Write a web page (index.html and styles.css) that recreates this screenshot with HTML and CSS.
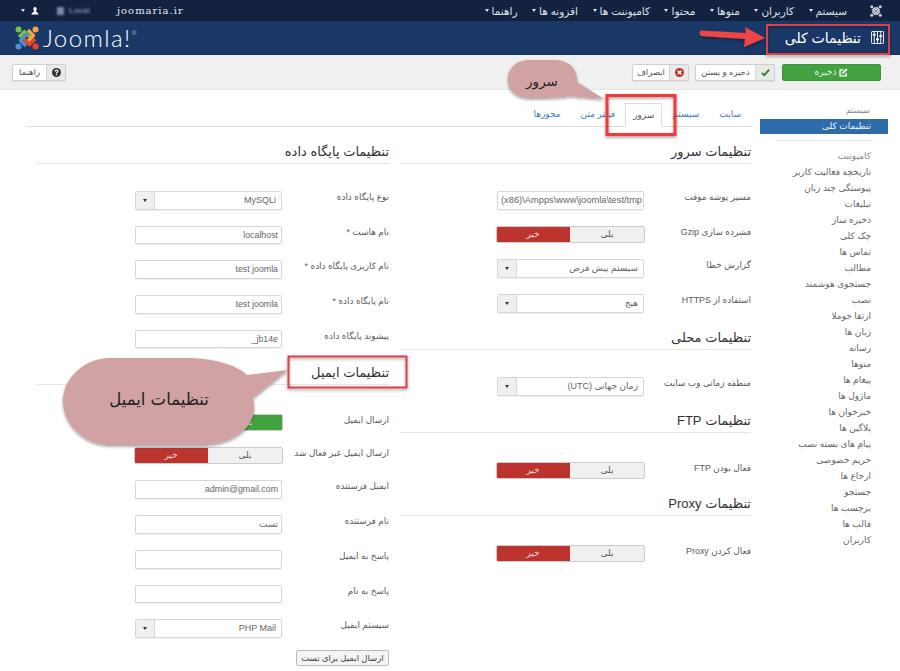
FILE: index.html
```html
<!DOCTYPE html>
<html lang="fa" dir="rtl">
<head>
<meta charset="utf-8">
<title>تنظیمات کلی</title>
<link rel="stylesheet" href="styles.css">
</head>
<body>
<nav class="topnav">
  <svg class="topnav-logo" viewBox="0 0 24 24"><g fill="none" stroke="#c9ced8" stroke-width="3.200" stroke-linejoin="round"><path d="M4 11L9.500 5.500 17 13"/><path d="M4 11L9.500 5.500 17 13" transform="rotate(90 12 12)"/><path d="M4 11L9.500 5.500 17 13" transform="rotate(180 12 12)"/><path d="M4 11L9.500 5.500 17 13" transform="rotate(270 12 12)"/></g><g fill="#c9ced8"><circle cx="3.500" cy="3.500" r="3"/><circle cx="20.500" cy="3.500" r="3"/><circle cx="20.500" cy="20.500" r="3"/><circle cx="3.500" cy="20.500" r="3"/></g></svg>
  <ul class="topnav-menu">
    <li>سیستم<i class="caret"></i></li>
    <li>کاربران<i class="caret"></i></li>
    <li>منوها<i class="caret"></i></li>
    <li>محتوا<i class="caret"></i></li>
    <li>کامپوننت ها<i class="caret"></i></li>
    <li>افزونه ها<i class="caret"></i></li>
    <li>راهنما<i class="caret"></i></li>
  </ul>
  <div class="topnav-left">
    <i class="caret"></i>
    <svg class="user-icon" viewBox="0 0 8 8"><path fill="#fff" d="M4 0C2.800 0 2.300 1 2.400 2.200 2.500 3.200 3 4 3 4.400 3 5 .6 5.400 .6 7V7.600H7.400V7C7.400 5.400 5 5 5 4.400 5 4 5.500 3.200 5.600 2.200 5.700 1 5.200 0 4 0Z"/></svg>
    <span class="blurred"><i class="blob"></i>Local</span>
    <span class="site-name">joomaria.ir</span>
  </div>
</nav>
<header class="brandbar">
  <h1 class="page-title">
    <svg class="title-icon" viewBox="0 0 14 14"><g fill="none" stroke="#fff"><rect x=".5" y=".5" width="13" height="13" rx="1"/><path d="M3.500 1V13M7 1V13M10.500 1V13"/></g><g fill="#fff"><rect x="2" y="3" width="3" height="2"/><rect x="5.500" y="8" width="3" height="2"/><rect x="9" y="4.500" width="3" height="2"/></g></svg>
    تنظیمات کلی
  </h1>
  <div class="joomla-brand">
    <span class="joomla-word">Joomla!<sup>®</sup></span>
    <svg class="joomla-logo" viewBox="0 0 24 24"><g fill="none" stroke-width="3.200" stroke-linejoin="round"><path stroke="#7ac143" d="M4 11L9.500 5.500 17 13"/><path stroke="#f9a541" d="M4 11L9.500 5.500 17 13" transform="rotate(90 12 12)"/><path stroke="#f44321" d="M4 11L9.500 5.500 17 13" transform="rotate(180 12 12)"/><path stroke="#5091cd" d="M4 11L9.500 5.500 17 13" transform="rotate(270 12 12)"/></g><circle cx="3.500" cy="3.500" r="3" fill="#7ac143"/><circle cx="20.500" cy="3.500" r="3" fill="#f9a541"/><circle cx="20.500" cy="20.500" r="3" fill="#f44321"/><circle cx="3.500" cy="20.500" r="3" fill="#5091cd"/></svg>
  </div>
</header>
<div class="toolbar">
  <button class="btn-save"><svg class="ico" viewBox="0 0 10 10"><path fill="none" stroke="#fff" stroke-width="1.500" d="M8 5.500V8.800H1.200V2H5"/><path fill="#fff" d="M3.500 5L8 .5 9.500 2 5 6.500H3.500Z"/></svg>ذخیره</button>
  <button class="btn btn-close"><span class="btn-ico"><svg class="ico" viewBox="0 0 10 10"><path fill="none" stroke="#378137" stroke-width="2.200" d="M1 5.500L3.800 8 9 1.800"/></svg></span><span class="btn-label">ذخیره و بستن</span></button>
  <button class="btn btn-cancel"><span class="btn-ico"><svg class="ico" viewBox="0 0 10 10"><circle cx="5" cy="5" r="5" fill="#bd362f"/><path stroke="#fff" stroke-width="1.500" d="M3 3L7 7M7 3L3 7"/></svg></span><span class="btn-label">انصراف</span></button>
  <button class="btn btn-help"><span class="btn-ico"><svg class="ico" viewBox="0 0 10 10"><circle cx="5" cy="5" r="5" fill="#333"/><path fill="none" stroke="#fff" stroke-width="1.300" d="M3.500 3.800C3.500 2 6.600 2 6.600 3.800 6.600 4.900 5 4.800 5 6"/><rect x="4.300" y="6.800" width="1.400" height="1.300" fill="#fff"/></svg></span><span class="btn-label">راهنما</span></button>
</div>
<div class="layout">
  <aside class="sidebar">
    <div class="side-head">سیستم</div>
    <div class="side-active">تنظیمات کلی</div>
    <hr class="side-rule">
    <ul class="side-list">
      <li>کامپوننت</li><li>تاریخچه فعالیت کاربر</li><li>پیوستگی چند زبان</li><li>تبلیغات</li><li>ذخیره ساز</li><li>چک کلی</li><li>تماس ها</li><li>مطالب</li><li>جستجوی هوشمند</li><li>نصب</li><li>ارتقا جوملا</li><li>زبان ها</li><li>رسانه</li><li>منوها</li><li>پیغام ها</li><li>ماژول ها</li><li>خبرخوان ها</li><li>پلاگین ها</li><li>پیام های بسته نصب</li><li>حریم خصوصی</li><li>ارجاع ها</li><li>جستجو</li><li>برچسب ها</li><li>قالب ها</li><li>کاربران</li>
    </ul>
  </aside>
  <main class="content">
    <ul class="tabs">
      <li>سایت</li><li>سیستم</li><li class="active">سرور</li><li>فیلتر متن</li><li>مجوزها</li>
    </ul>
    <div class="columns">
      <section class="col col-server">
        <h3 class="first">تنظیمات سرور</h3>
        <div class="field"><label>مسیر پوشه موقت</label><div class="input path">(x86)\Ampps\www\joomla\test/tmp</div></div>
        <div class="field toggle-row"><label>فشرده سازی Gzip</label><div class="toggle"><span class="opt">بلی</span><span class="opt no">خیر</span></div></div>
        <div class="field"><label>گزارش خطا</label><div class="select"><span class="val">سیستم پیش فرض</span><span class="arrow"><i class="caret dark"></i></span></div></div>
        <div class="field"><label>استفاده از HTTPS</label><div class="select"><span class="val">هیچ</span><span class="arrow"><i class="caret dark"></i></span></div></div>
        <h3>تنظیمات محلی</h3>
        <div class="field"><label>منطقه زمانی وب سایت</label><div class="select"><span class="val">زمان جهانی (UTC)</span><span class="arrow"><i class="caret dark"></i></span></div></div>
        <h3 class="before-toggle">تنظیمات FTP</h3>
        <div class="field toggle-row"><label>فعال بودن FTP</label><div class="toggle"><span class="opt">بلی</span><span class="opt no">خیر</span></div></div>
        <h3 class="before-toggle">تنظیمات Proxy</h3>
        <div class="field toggle-row"><label>فعال کردن Proxy</label><div class="toggle"><span class="opt">بلی</span><span class="opt no">خیر</span></div></div>
      </section>
      <section class="col col-db">
        <h3 class="first">تنظیمات پایگاه داده</h3>
        <div class="field tall"><label>نوع پایگاه داده</label><div class="select"><span class="val">MySQLi</span><span class="arrow"><i class="caret dark"></i></span></div></div>
        <div class="field tall"><label>نام هاست *</label><div class="input">localhost</div></div>
        <div class="field tall"><label>نام کاربری پایگاه داده *</label><div class="input">test joomla</div></div>
        <div class="field tall"><label>نام پایگاه داده *</label><div class="input">test joomla</div></div>
        <div class="field tall"><label>پیشوند پایگاه داده</label><div class="input">_jb14e</div></div>
        <h3 class="before-toggle">تنظیمات ایمیل</h3>
        <div class="field toggle-row"><label>ارسال ایمیل</label><div class="toggle on"><span class="opt yes">بلی</span><span class="opt">خیر</span></div></div>
        <div class="field toggle-row"><label>ارسال ایمیل غیر فعال شد</label><div class="toggle"><span class="opt">بلی</span><span class="opt no">خیر</span></div></div>
        <div class="field tall"><label>ایمیل فرستنده</label><div class="input">admin@gmail.com</div></div>
        <div class="field tall"><label>نام فرستنده</label><div class="input fa">تست</div></div>
        <div class="field tall"><label>پاسخ به ایمیل</label><div class="input"></div></div>
        <div class="field tall"><label>پاسخ به نام</label><div class="input"></div></div>
        <div class="field tall last"><label>سیستم ایمیل</label><div class="select"><span class="val">PHP Mail</span><span class="arrow"><i class="caret dark"></i></span></div></div>
        <button class="btn-test">ارسال ایمیل برای تست</button>
      </section>
    </div>
  </main>
</div>
<svg class="annotations" viewBox="0 0 900 671">
  <defs><filter id="sh" x="-10%" y="-10%" width="125%" height="125%"><feDropShadow dx="0" dy="1.500" stdDeviation="1.500" flood-color="#000" flood-opacity=".4"/></filter></defs>
  <g filter="url(#sh)">
    <path fill="#f04444" d="M701 30.500L746 33 745 27 765 38 744 47 745 39 701 36Q698 33 701 30.500Z"/>
    <rect x="767" y="25" width="122" height="29" fill="none" stroke="#d9434a" stroke-width="2"/>
    <rect x="607" y="95.500" width="68" height="39" fill="none" stroke="#ee3b3b" stroke-width="3"/>
    <path fill="#d0a2a3" d="M530 60H554C570 60 578 70 577 82L604 99 570 96Q558 98 530 98 508 97 508 79C508 68 516 60 530 60Z"/>
    <rect x="288.500" y="356.500" width="118" height="31" fill="none" stroke="#d9434a" stroke-width="2"/>
    <path fill="#d0a2a3" d="M110 358H185C220 358 240 368 247 375L288 370 253 398C260 425 235 445 200 445H110C85 445 63 425 63 401 63 378 85 358 110 358Z"/>
  </g>
  <text class="note-sm" x="542" y="86" text-anchor="middle">سرور</text>
  <text class="note" x="159" y="405" text-anchor="middle">تنظیمات ایمیل</text>
</svg>
</body>
</html>
```
FILE: styles.css
```css
* { box-sizing: border-box; }
html, body { margin: 0; padding: 0; overflow: hidden; }
body {
  width: 900px;
  height: 671px;
  background: #fff;
  color: #5a5a5a;
  font-family: "Liberation Sans", "DejaVu Sans", sans-serif;
  font-size: 9px;
  position: relative;
}
ul { list-style: none; margin: 0; padding: 0; }

.caret {
  display: inline-block;
  width: 0; height: 0;
  border-left: 2.500px solid transparent;
  border-right: 2.500px solid transparent;
  border-top: 3px solid #dfe3ea;
}
.caret.dark { border-top-color: #333; }

/* top navigation */
.topnav {
  height: 21px;
  background: #12223f;
  display: flex;
  align-items: center;
  color: #dfe3ea;
}
.topnav-logo { width: 12px; height: 12px; margin-right: 18px; flex: none; }
.topnav-menu { display: flex; margin-right: 23px; font-size: 10.500px; }
.topnav-menu li { display: flex; align-items: center; gap: 3px; margin-left: 14.500px; white-space: nowrap; }
.topnav-left {
  margin-right: auto;
  direction: ltr;
  display: flex;
  align-items: center;
  padding-left: 21px;
}
.user-icon { width: 8px; height: 8px; margin-left: 6px; }
.blurred {
  display: flex;
  align-items: center;
  gap: 5px;
  width: 38px;
  margin-left: 18px;
  filter: blur(1.200px);
  color: #7f8aa0;
  font-size: 8px;
  font-weight: bold;
}
.blob { width: 7px; height: 8px; background: #7f8aa0; flex: none; }
.site-name {
  margin-left: 22px;
  font-family: "DejaVu Serif", serif;
  font-size: 10px;
  letter-spacing: 1px;
  color: #e8ecf2;
}

/* brand bar */
.brandbar {
  height: 34px;
  background: #1a3867;
  border-bottom: 1px solid #14305c;
  display: flex;
  align-items: center;
  justify-content: space-between;
}
.page-title {
  margin: 0 16px 0 0;
  display: flex;
  align-items: center;
  gap: 10px;
  font-size: 14px;
  font-weight: normal;
  color: #fff;
}
.title-icon { width: 13px; height: 13px; }
.joomla-brand { direction: ltr; display: flex; flex-direction: row-reverse; align-items: center; gap: 4px; padding-left: 15px; }
.joomla-logo { width: 24px; height: 24px; }
.joomla-word { font-family: Lato, sans-serif; font-weight: 300; font-size: 24px; color: #fff; letter-spacing: 1.400px; line-height: 1; }
.joomla-word sup { font-size: 6px; vertical-align: 12px; line-height: 0; }

/* toolbar */
.toolbar {
  height: 35px;
  background: #f0f0f0;
  border-bottom: 1px solid #e4e4e4;
  display: flex;
  align-items: center;
  padding: 0 19px 0 12px;
  gap: 6px;
}
.toolbar button { font: inherit; cursor: pointer; padding: 0; }
.ico { width: 9px; height: 9px; display: block; }
.btn-save {
  width: 99px; height: 17px;
  margin-left: 1px;
  background: #41a33f;
  border: 1px solid #3b963a;
  border-radius: 2px;
  color: #e8f5e6;
  display: flex;
  align-items: center;
  justify-content: center;
  gap: 3px;
}
.btn {
  height: 17px;
  display: flex;
  align-items: center;
  background: #fff;
  border: 1px solid #cfcfcf;
  border-radius: 2px;
  color: #555;
  box-shadow: 0 1px 1px rgba(0,0,0,.08);
}
.btn-ico {
  width: 19px;
  height: 100%;
  display: flex;
  align-items: center;
  justify-content: center;
  background: #e9e9e9;
  border-left: 1px solid #d6d6d6;
  flex: none;
}
.btn-label { flex: 1; text-align: center; font-size: 8.500px; }
.btn-close { width: 80px; }
.btn-cancel { width: 57px; }
.btn-help { width: 54px; margin-right: auto; }

/* page layout */
.layout { display: flex; align-items: flex-start; }
.sidebar { width: 128px; margin: 0 12px 0 8px; flex: none; padding-top: 15px; }
.side-head { height: 14px; line-height: 12px; padding-right: 18px; font-size: 8px; color: #888; }
.side-active {
  height: 15px;
  line-height: 15px;
  background: #2d6ca8;
  color: #eef4fa;
  padding-right: 17px;
}
.side-rule { border: 0; border-top: 1px solid #e8e8e8; margin: 6px 16px 7px; }
.side-list li { height: 16px; line-height: 16px; padding-right: 17px; color: #666; white-space: nowrap; }
.side-list li:first-child { color: #888; }

.content { width: 726px; flex: none; padding-top: 13px; }
.tabs { display: flex; height: 24px; border-bottom: 1px solid #ddd; padding-right: 1px; color: #3f7ab5; }
.tabs li { height: 24px; padding: 6px 10px 0; white-space: nowrap; }
.tabs li.active {
  background: #fff;
  color: #555;
  border: 1px solid #ddd;
  border-bottom-color: #fff;
  padding: 6px 7px 0;
}

.columns { display: flex; align-items: flex-start; gap: 11px; }
.col { flex: none; }
.col-server { width: 351px; margin-right: 1px; }
.col-db { width: 353px; }

h3 {
  margin: 0 0 27px;
  height: 21px;
  border-bottom: 1px solid #e6e6e6;
  font-size: 13px;
  font-weight: normal;
  line-height: 18px;
  color: #333;
  white-space: nowrap;
}
h3.first { height: 37px; padding-top: 16px; }
h3.before-toggle { margin-bottom: 29px; }

.field { display: flex; height: 19px; margin-bottom: 16px; }
.field.tall { height: 18.700px; }
.field.last { margin-bottom: 12px; }
.toggle-row { height: 17px; }
.field label { width: 107px; flex: none; line-height: 12px; font-size: 8.900px; white-space: nowrap; }

.input, .select {
  width: 147px;
  height: 100%;
  background: #fff;
  border: 1px solid #d6d6d6;
  border-radius: 2px;
  box-shadow: 0 1px 1px rgba(0,0,0,.06);
  color: #666;
  line-height: 17px;
}
.input { padding: 0 3px; overflow: hidden; white-space: nowrap; direction: ltr; text-align: right; font-size: 8.800px; }
.input.path { font-size: 9.300px; }
.input.fa { direction: rtl; text-align: right; }
.select { display: flex; overflow: hidden; }
.select .val { flex: 1; padding: 0 5px; white-space: nowrap; }
.arrow {
  width: 19px;
  background: #f0f0f0;
  border-right: 1px solid #d6d6d6;
  display: flex;
  align-items: center;
  justify-content: center;
}
.toggle {
  width: 149px;
  margin-right: -1px;
  display: flex;
  border-radius: 2px;
  overflow: hidden;
  border: 1px solid #ccc;
  background: #f0f0f0;
}
.opt { flex: 1; text-align: center; line-height: 15px; }
.opt.no { background: #bd342e; color: #f6dcda; margin: -1px 0 -1px -1px; line-height: 17px; }
.opt.yes { background: #41a33f; color: #e8f5e6; margin: -1px -1px -1px 0; line-height: 17px; }

.btn-test {
  width: 93px;
  height: 16px;
  padding: 0;
  display: block;
  background: #f4f4f4;
  border: 1px solid #bbb;
  border-radius: 2px;
  font: inherit;
  font-size: 8.500px;
  color: #444;
}

/* annotations drawn over the page */
.annotations { position: absolute; left: 0; top: 0; width: 900px; height: 671px; pointer-events: none; }
.annotations text { direction: rtl; font-family: "DejaVu Sans", sans-serif; fill: #222; }
.note { font-size: 16.500px; }
.note-sm { font-size: 13.500px; }
```
